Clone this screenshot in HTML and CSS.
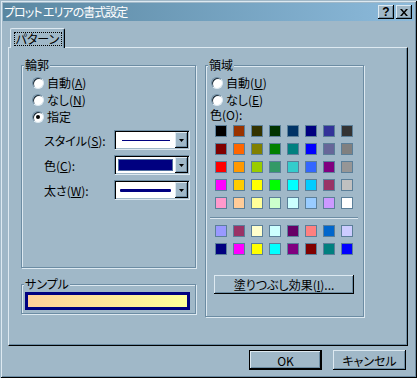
FILE: index.html
```html
<!DOCTYPE html>
<html lang="ja">
<head>
<meta charset="utf-8">
<title>プロット エリアの書式設定</title>
<link rel="stylesheet" href="styles.css">
</head>
<body>
<div class="window">
  <div class="titlebar">
    <span class="title">プロット エリアの書式設定</span>
    <div class="tbtns">
      <span class="tbtn help">?</span>
      <span class="tbtn"><svg width="8" height="7" viewBox="0 0 8 7"><path d="M0 0h2l2 2.5L6 0h2L5 3.5 8 7H6L4 4.5 2 7H0l3-3.5z" fill="#000"/></svg></span>
    </div>
  </div>
  <div class="tabs">
    <div class="tab"><span class="focus">パターン</span></div>
  </div>
  <div class="panel">
    <div class="col-left">
      <div class="group g-outline">
        <span class="gtitle">輪郭</span>
        <div class="radio"><span class="rb"></span><span>自動(<u>A</u>)</span></div>
        <div class="radio"><span class="rb"></span><span>なし(<u>N</u>)</span></div>
        <div class="radio"><span class="rb on"></span><span>指定</span></div>
        <div class="field">
          <span class="lbl">スタイル(<u>S</u>):</span>
          <div class="combo">
            <div class="cfield"><span class="line thin"></span></div>
            <div class="cbtn"><svg width="5" height="3" viewBox="0 0 5 3"><path d="M0 0h5L2.5 3z" fill="#000"/></svg></div>
          </div>
        </div>
        <div class="field">
          <span class="lbl">色(<u>C</u>):</span>
          <div class="combo">
            <div class="cfield swatchfield"><span class="colorfill"></span></div>
            <div class="cbtn"><svg width="5" height="3" viewBox="0 0 5 3"><path d="M0 0h5L2.5 3z" fill="#000"/></svg></div>
          </div>
        </div>
        <div class="field">
          <span class="lbl">太さ(<u>W</u>):</span>
          <div class="combo">
            <div class="cfield"><span class="line thick"></span></div>
            <div class="cbtn"><svg width="5" height="3" viewBox="0 0 5 3"><path d="M0 0h5L2.5 3z" fill="#000"/></svg></div>
          </div>
        </div>
      </div>
      <div class="group g-sample">
        <span class="gtitle">サンプル</span>
        <div class="sample"></div>
      </div>
    </div>
    <div class="group g-area">
      <span class="gtitle">領域</span>
      <div class="radio r2"><span class="rb"></span><span>自動(<u>U</u>)</span></div>
      <div class="radio r2"><span class="rb"></span><span>なし(<u>E</u>)</span></div>
      <div class="clbl">色(O):</div>
      <div class="grid">
        <span class="sw" style="background:#000000"></span>
        <span class="sw" style="background:#993300"></span>
        <span class="sw" style="background:#333300"></span>
        <span class="sw" style="background:#003300"></span>
        <span class="sw" style="background:#003366"></span>
        <span class="sw" style="background:#000080"></span>
        <span class="sw" style="background:#333399"></span>
        <span class="sw" style="background:#333333"></span>
        <span class="sw" style="background:#800000"></span>
        <span class="sw" style="background:#ff6600"></span>
        <span class="sw" style="background:#808000"></span>
        <span class="sw" style="background:#008000"></span>
        <span class="sw" style="background:#008080"></span>
        <span class="sw" style="background:#0000ff"></span>
        <span class="sw" style="background:#666699"></span>
        <span class="sw" style="background:#808080"></span>
        <span class="sw" style="background:#ff0000"></span>
        <span class="sw" style="background:#ff9900"></span>
        <span class="sw" style="background:#99cc00"></span>
        <span class="sw" style="background:#339966"></span>
        <span class="sw" style="background:#33cccc"></span>
        <span class="sw" style="background:#3366ff"></span>
        <span class="sw" style="background:#800080"></span>
        <span class="sw" style="background:#969696"></span>
        <span class="sw" style="background:#ff00ff"></span>
        <span class="sw" style="background:#ffcc00"></span>
        <span class="sw" style="background:#ffff00"></span>
        <span class="sw" style="background:#00ff00"></span>
        <span class="sw" style="background:#00ffff"></span>
        <span class="sw" style="background:#00ccff"></span>
        <span class="sw" style="background:#993366"></span>
        <span class="sw" style="background:#c0c0c0"></span>
        <span class="sw" style="background:#ff99cc"></span>
        <span class="sw" style="background:#ffcc99"></span>
        <span class="sw" style="background:#ffff99"></span>
        <span class="sw" style="background:#ccffcc"></span>
        <span class="sw" style="background:#ccffff"></span>
        <span class="sw" style="background:#99ccff"></span>
        <span class="sw" style="background:#cc99ff"></span>
        <span class="sw" style="background:#ffffff"></span>
      </div>
      <div class="sep"></div>
      <div class="grid grid2">
        <span class="sw" style="background:#9999ff"></span>
        <span class="sw" style="background:#993366"></span>
        <span class="sw" style="background:#ffffcc"></span>
        <span class="sw" style="background:#ccffff"></span>
        <span class="sw" style="background:#660066"></span>
        <span class="sw" style="background:#ff8080"></span>
        <span class="sw" style="background:#0066cc"></span>
        <span class="sw" style="background:#ccccff"></span>
        <span class="sw" style="background:#000080"></span>
        <span class="sw" style="background:#ff00ff"></span>
        <span class="sw" style="background:#ffff00"></span>
        <span class="sw" style="background:#00ffff"></span>
        <span class="sw" style="background:#800080"></span>
        <span class="sw" style="background:#800000"></span>
        <span class="sw" style="background:#008080"></span>
        <span class="sw" style="background:#0000ff"></span>
      </div>
      <div class="btn fillbtn">塗りつぶし効果(<u>I</u>)...</div>
    </div>
  </div>
  <div class="footer">
    <div class="btn default">OK</div>
    <div class="btn">キャンセル</div>
  </div>
</div>
</body>
</html>
```

FILE: styles.css
```css
html, body {
  margin: 0;
  padding: 0;
  background: #a0b8c8;
}

body {
  font-family: "Noto Sans CJK JP", "Noto Sans", sans-serif;
  font-size: 12px;
  color: #000;
  font-feature-settings: "palt" 1;
}

u {
  text-decoration: underline;
  text-underline-offset: 1px;
}

.window {
  width: 417px;
  height: 378px;
  box-sizing: border-box;
  padding: 3px;
  background: #a0b8c8;
  box-shadow: inset 1px 1px #a0b8c8, inset -1px -1px #000, inset 2px 2px #dde9f1, inset -2px -2px #6c8ca3;
  display: flex;
  flex-direction: column;
}

.titlebar {
  height: 18px;
  display: flex;
  align-items: center;
  background: linear-gradient(to right, #5a87a1, #8cbadb);
  color: #fff;
  padding-left: 1px;
}

.title {
  line-height: 18px;
  white-space: nowrap;
  letter-spacing: -1px;
}

.tbtns {
  margin-left: auto;
  margin-right: 2px;
  display: flex;
  gap: 2px;
}

.tbtn {
  width: 16px;
  height: 14px;
  box-sizing: border-box;
  background: #a0b8c8;
  box-shadow: inset -1px -1px #000, inset 1px 1px #dde9f1, inset -2px -2px #6c8ca3;
  display: flex;
  align-items: center;
  justify-content: center;
  color: #000;
}

.tbtn.help {
  font-family: "Liberation Sans", sans-serif;
  font-weight: bold;
  font-size: 12px;
  line-height: 14px;
}

.tabs {
  display: flex;
  padding-left: 7px;
  margin-top: 7px;
}

.tab {
  position: relative;
  z-index: 1;
  width: 55px;
  height: 20px;
  margin-bottom: -1px;
  box-sizing: border-box;
  background: #a0b8c8;
  border-top: 1px solid #dde9f1;
  border-left: 1px solid #dde9f1;
  border-right: 1px solid #000;
  border-radius: 2px 2px 0 0;
  box-shadow: inset -1px 0 #6c8ca3;
  display: flex;
  justify-content: center;
  padding-top: 3px;
}

.focus {
  width: 48px;
  height: 14px;
  box-sizing: border-box;
  border: 1px dotted #000;
  text-align: center;
  line-height: 12px;
}

.panel {
  margin-left: 5px;
  width: 400px;
  height: 299px;
  box-sizing: border-box;
  border-top: 1px solid #dde9f1;
  border-left: 1px solid #dde9f1;
  border-right: 1px solid #000;
  border-bottom: 1px solid #000;
  box-shadow: inset -1px -1px #6c8ca3;
  padding: 17px 0 0 12px;
  display: flex;
  gap: 9px;
  align-items: flex-start;
}

.col-left {
  width: 175px;
  display: flex;
  flex-direction: column;
  gap: 16px;
}

.group {
  position: relative;
  box-sizing: border-box;
  border: 1px solid #6c8ca3;
  box-shadow: inset 1px 1px #dde9f1, 1px 1px #dde9f1;
}

.gtitle {
  position: absolute;
  top: -8px;
  left: 2px;
  padding: 0 1px;
  background: #a0b8c8;
  line-height: 14px;
}

.g-outline {
  height: 203px;
  padding: 8px 0 0 10px;
}

.g-sample {
  height: 30px;
  padding: 7px 0 0 3px;
}

.g-area {
  width: 159px;
  height: 252px;
  padding: 8px 0 0 4px;
}

.radio {
  display: flex;
  align-items: center;
  height: 17px;
  line-height: 17px;
}

.r2 {
  margin-left: 1px;
}

.rb {
  width: 12px;
  height: 12px;
  flex: none;
  box-sizing: border-box;
  border-radius: 50%;
  background: #fff;
  border: 1px solid;
  border-color: #6c8ca3 #dde9f1 #dde9f1 #6c8ca3;
  box-shadow: inset 1px 1px #1c2c38;
  margin-right: 3px;
  display: flex;
  align-items: center;
  justify-content: center;
}

.rb.on::after {
  content: "";
  width: 4px;
  height: 4px;
  border-radius: 50%;
  background: #000;
}

.field {
  display: flex;
  align-items: center;
  height: 20px;
  margin-top: 5px;
  padding-left: 12px;
}

.lbl {
  width: 70px;
  white-space: nowrap;
}

.combo {
  width: 76px;
  height: 20px;
  box-sizing: border-box;
  display: flex;
  background: #fff;
  border: 1px solid;
  border-color: #6c8ca3 #dde9f1 #dde9f1 #6c8ca3;
  box-shadow: inset 1px 1px #000, inset -1px -1px #a0b8c8;
  padding: 1px;
}

.cfield {
  flex: 1;
  display: flex;
  align-items: center;
  justify-content: center;
}

.swatchfield {
  padding: 2px;
  align-items: stretch;
}

.colorfill {
  flex: 1;
  background: #000080;
  border: 1px solid #5070a0;
}

.line {
  display: block;
  background: #000080;
}

.line.thin {
  width: 48px;
  height: 1px;
}

.line.thick {
  width: 51px;
  height: 3px;
  border-radius: 1px;
}

.cbtn {
  width: 13px;
  flex: none;
  background: #a0b8c8;
  box-shadow: inset -1px -1px #000, inset 1px 1px #dde9f1, inset -2px -2px #6c8ca3;
  display: flex;
  align-items: center;
  justify-content: center;
}

.sample {
  width: 165px;
  height: 18px;
  box-sizing: border-box;
  border: 3px solid #000080;
  background: linear-gradient(to right, #ffd09a, #ffff99);
}

.clbl {
  height: 14px;
  line-height: 14px;
}

.grid {
  display: grid;
  grid-template-columns: repeat(8, 12px);
  grid-auto-rows: 12px;
  gap: 6px;
  margin: 3px 0 0 5px;
}

.grid2 {
  margin-top: 6px;
}

.sw {
  box-sizing: border-box;
  border: 1px solid #5b7f99;
}

.sep {
  width: 148px;
  height: 0;
  border-top: 1px solid #6c8ca3;
  border-bottom: 1px solid #dde9f1;
  margin-top: 8px;
}

.btn {
  box-sizing: border-box;
  background: #a0b8c8;
  box-shadow: inset -1px -1px #000, inset 1px 1px #dde9f1, inset -2px -2px #6c8ca3;
  display: flex;
  align-items: center;
  justify-content: center;
  white-space: nowrap;
}

.fillbtn {
  width: 140px;
  height: 19px;
  margin: 20px 0 0 4px;
}

.footer {
  display: flex;
  justify-content: flex-end;
  gap: 11px;
  margin-top: 4px;
  padding-right: 8px;
}

.footer .btn {
  width: 73px;
  height: 20px;
}

.btn.default {
  border: 1px solid #000;
}
```
